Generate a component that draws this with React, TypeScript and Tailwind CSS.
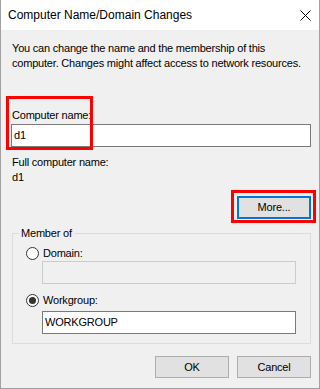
import React from "react";

function Radio({ checked, label }: { checked?: boolean; label: string }) {
  return (
    <div className="flex items-center h-[15px] gap-[4px]">
      <span className="w-[13px] h-[13px] rounded-full border border-[#333333] bg-white flex items-center justify-center shrink-0">
        {checked && <span className="w-[7px] h-[7px] rounded-full bg-[#333333]" />}
      </span>
      <span className="leading-[15px]">{label}</span>
    </div>
  );
}

function Btn({ label, focused }: { label: string; focused?: boolean }) {
  return (
    <button
      className={
        focused
          ? "w-[74px] h-[23px] bg-[#e1e1e1] border-2 border-[#0078d7] text-[11px] leading-[15px]"
          : "w-[74px] h-[22px] bg-[#e1e1e1] border border-[#adadad] text-[11px] leading-[15px]"
      }
    >
      {label}
    </button>
  );
}

export default function App() {
  return (
    <div className="relative w-[320px] h-[389px] flex flex-col bg-[#f0f0f0] border-x border-b border-[#a0a0a0] text-black font-['Liberation_Sans',Arial,sans-serif]">
      {/* Title bar */}
      <div className="h-[30px] bg-white flex items-center justify-between pl-[7px] pr-[7px] shrink-0 text-[12px]">
        <span className="leading-[15px]">Computer Name/Domain Changes</span>
        <svg width="11" height="11" viewBox="0 0 11 11" className="mr-[1px]">
          <path d="M0.5 0.5 L10.5 10.5 M10.5 0.5 L0.5 10.5" stroke="#000" strokeWidth="1" />
        </svg>
      </div>

      {/* Body */}
      <div className="flex-1 flex flex-col pl-[10px] pr-[8px] pt-[11px] text-[11px] tracking-[-0.2px]">
        <p className="leading-[15px] pl-px">
          You can change the name and the membership of this computer. Changes might affect access to network resources.
        </p>

        <div className="relative mt-[37px] flex flex-col">
          <label className="leading-[15px] pl-px">Computer name:</label>
          <div className="mt-px h-[23px] border border-[#7a7a7a] bg-white pl-[2px] leading-[21px]">d1</div>
          <div className="absolute -left-[5px] -top-[12px] w-[87px] h-[54px] border-[3px] border-[#ff0000] pointer-events-none" />
        </div>

        <p className="mt-[8px] leading-[15px] pl-px">Full computer name:</p>
        <p className="leading-[15px] pl-px">d1</p>

        <div className="relative mt-[11px] self-end">
          <Btn label="More..." focused />
          <div className="absolute -left-[6px] -top-[6px] -right-[5px] -bottom-[4px] border-[3px] border-[#ff0000] pointer-events-none" />
        </div>

        {/* Member of group */}
        <div className="relative mt-[14px] ml-px h-[111px] border border-[#dcdcdc] pl-[13px] pr-[14px] pt-[12px] flex flex-col">
          <span className="absolute -top-[8px] left-[6px] px-[2px] bg-[#f0f0f0] leading-[15px]">Member of</span>
          <Radio label="Domain:" />
          <div className="ml-[16px] h-[23px] border border-[#cccccc] bg-[#f0f0f0]" />
          <div className="mt-[9px]">
            <Radio checked label="Workgroup:" />
          </div>
          <div className="ml-[16px] mt-[3px] h-[23px] border border-[#7a7a7a] bg-white pl-[2px] leading-[21px]">WORKGROUP</div>
        </div>

        <div className="mt-[12px] flex justify-end gap-[8px]">
          <Btn label="OK" />
          <Btn label="Cancel" />
        </div>
      </div>
    </div>
  );
}
